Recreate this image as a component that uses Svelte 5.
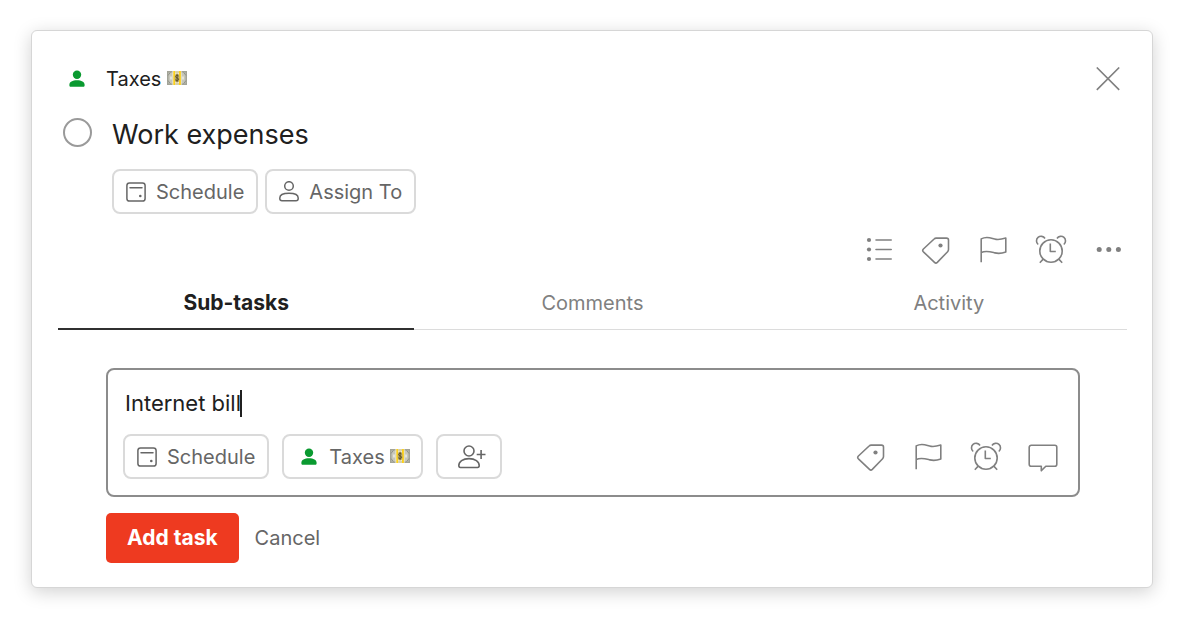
<script>
  let title = $state('Internet bill');
  let done = $state(false);
  let active = $state('Sub-tasks');
  const tabs = ['Sub-tasks', 'Comments', 'Activity'];
</script>

{#snippet person()}
  <svg class="person" width="16" height="18" viewBox="0 0 16 18" fill="#0a9a30" aria-hidden="true">
    <circle cx="8" cy="4.800" r="4.200" />
    <path d="M0.400 14.600C0.400 11.900 3.600 10.200 8 10.200s7.600 1.700 7.600 4.400v0.900c0 0.800-0.600 1.300-1.300 1.300H1.700c-0.700 0-1.300-0.500-1.300-1.300z" />
  </svg>
{/snippet}

{#snippet money()}
  <svg class="money" width="20" height="14" viewBox="0 0 20 14" role="img" aria-label="Money">
    <rect width="20" height="14" fill="#a3a498" />
    <rect x="1.500" y="1.500" width="17" height="11" fill="#c6c6ba" />
    <path d="M1 4.500 3.500 1.200M1 9.500l2.500 3.300M19 4.500l-2.500-3.300M19 9.500l-2.500 3.300" stroke="#92938a" fill="none" />
    <path d="M4 5.500v3M16 5.500v3" stroke="#eeeee4" stroke-width="1.500" />
    <rect x="5.500" width="9" height="14" fill="#f3efd8" />
    <rect x="6.300" width="1.900" height="14" fill="#fbd01c" />
    <rect x="12" width="1.900" height="14" fill="#fbd01c" />
    <ellipse cx="10.100" cy="7" rx="2.400" ry="4.500" fill="#b5a672" />
    <rect x="8.200" width="3.800" height="2" fill="#d8d0a8" />
    <rect x="8.200" y="12" width="3.800" height="2" fill="#d8d0a8" />
    <path d="M11.500 5c-0.500-0.800-2.900-0.800-2.900 0.600 0 1.500 3 1.100 3 2.700 0 1.500-2.700 1.400-3.300 0.500M10.100 3.200v7.600" fill="none" stroke="#5f5326" />
  </svg>
{/snippet}

{#snippet calendar()}
  <svg width="20" height="20" viewBox="0 0 20 20" fill="none" stroke="#666" stroke-width="1.500" aria-hidden="true">
    <rect x="0.900" y="0.900" width="18.200" height="18.200" rx="2.600" />
    <path d="M4 5.700h12" stroke-linecap="round" />
    <circle cx="14.300" cy="14" r="1.300" fill="#666" stroke="none" />
  </svg>
{/snippet}

{#snippet tag()}
  <svg width="32" height="32" viewBox="0 0 32 32" aria-hidden="true">
    <path d="M15.200 4.100h10.300a2 2 0 0 1 2 2v9.500a3 3 0 0 1-0.900 2.100L16.300 28.400a2 2 0 0 1-2.800 0L2.400 17.800a2 2 0 0 1 0-2.800L13.100 5a3 3 0 0 1 2.100-0.900z" />
    <circle class="dot" cx="19.500" cy="11.500" r="2.100" />
  </svg>
{/snippet}

{#snippet flag()}
  <svg width="32" height="32" viewBox="0 0 32 32" aria-hidden="true">
    <path d="M3.200 28.300V4.900C9.500 1.400 13.700 4.700 18.100 5.400c3.500 0.600 6.500-0.300 9.700-1.300v13.900c-4 1.500-7.300 1.800-11 0.900-4.600-1.200-8.600-2.600-13.600-0.400" />
  </svg>
{/snippet}

{#snippet alarm()}
  <svg width="32" height="32" viewBox="0 0 32 32" aria-hidden="true">
    <circle cx="16" cy="17" r="11.200" />
    <path d="M15.300 9.500v8h5.500M8.200 25.100l-3.400 3.600M23.800 25.100l3.400 3.600M3.200 10.500A4.600 4.600 0 1 1 10 4.500M28.800 10.500A4.600 4.600 0 1 0 22 4.500" />
  </svg>
{/snippet}

<main class="card">
  <header class="head">
    <span class="lead">{@render person()}</span>
    <span class="project">Taxes {@render money()}</span>
    <button class="icon close" aria-label="Close">
      <svg width="24" height="24" viewBox="0 0 24 24" aria-hidden="true"><path d="M0.800 0.500 23.200 22.900M23.200 0.500 0.800 22.900" /></svg>
    </button>
  </header>

  <div class="title">
    <span class="lead"><input class="check" type="checkbox" id="done" bind:checked={done} /></span>
    <label for="done">Work expenses</label>
  </div>

  <div class="chips main-chips">
    <button class="chip">{@render calendar()}Schedule</button>
    <button class="chip">
      <svg width="20" height="22" viewBox="0 0 20 22" fill="none" stroke="#666" stroke-width="1.500" aria-hidden="true">
        <circle cx="10" cy="5" r="4.300" />
        <path d="M0.800 17c0-2.900 3.900-4.700 9.200-4.700s9.200 1.800 9.200 4.700v0.400c0 1.500-0.900 2.300-2.200 2.300H3c-1.300 0-2.200-0.800-2.200-2.300z" />
      </svg>Assign To
    </button>
  </div>

  <div class="toolbar">
    <button class="icon" aria-label="Sub-task list">
      <svg width="32" height="32" viewBox="0 0 32 32" aria-hidden="true">
        <path d="M12 6h15.200M12 15.500h15.200M12 25h15.200" stroke-linecap="round" />
        <circle class="dot" cx="5" cy="6" r="2.100" /><circle class="dot" cx="5" cy="15.500" r="2.100" /><circle class="dot" cx="5" cy="25" r="2.100" />
      </svg>
    </button>
    <button class="icon" aria-label="Labels">{@render tag()}</button>
    <button class="icon" aria-label="Priority">{@render flag()}</button>
    <button class="icon" aria-label="Reminders">{@render alarm()}</button>
    <button class="icon" aria-label="More actions">
      <svg width="32" height="32" viewBox="0 0 32 32" aria-hidden="true">
        <circle class="dot" cx="7.200" cy="15.500" r="2.500" /><circle class="dot" cx="16.800" cy="15.500" r="2.500" /><circle class="dot" cx="26.400" cy="15.500" r="2.500" />
      </svg>
    </button>
  </div>

  <div class="tabs" role="tablist">
    {#each tabs as tab}
      <button role="tab" class:active={active === tab} aria-selected={active === tab} onclick={() => (active = tab)}>{tab}</button>
    {/each}
  </div>

  <form class="form" onsubmit={(e) => e.preventDefault()}>
    <div class="editor">
      <div class="field">
        <input type="text" aria-label="Task name" bind:value={title} /><span class="caret"></span>
      </div>
      <div class="row">
        <div class="chips wide">
          <button type="button" class="chip">{@render calendar()}Schedule</button>
          <button type="button" class="chip project-chip">{@render person()}<span>Taxes {@render money()}</span></button>
          <button type="button" class="chip assign" aria-label="Assign">
            <svg width="28" height="24" viewBox="0 0 28 24" fill="none" stroke="#666" stroke-width="1.600" aria-hidden="true">
              <circle cx="11" cy="6" r="5" />
              <path d="M0.800 20.600c0-4 4-7 10.200-7s10.200 3 10.200 7c0 1.300-0.500 1.900-1.600 1.900H2.400c-1.100 0-1.600-0.600-1.600-1.900zM18.700 9.500h8.800M23.100 5.100v8.800" />
            </svg>
          </button>
        </div>
        <div class="tools">
          <button type="button" class="icon" aria-label="Labels">{@render tag()}</button>
          <button type="button" class="icon" aria-label="Priority">{@render flag()}</button>
          <button type="button" class="icon" aria-label="Reminders">{@render alarm()}</button>
          <button type="button" class="icon" aria-label="Comment">
            <svg width="32" height="32" viewBox="0 0 32 32" aria-hidden="true">
              <path d="M4.200 4.300h23.600a2 2 0 0 1 2 2v17a2 2 0 0 1-2 2H18.800L14.300 29.800V25.300H4.200a2 2 0 0 1-2-2v-17a2 2 0 0 1 2-2z" />
            </svg>
          </button>
        </div>
      </div>
    </div>
    <div class="actions">
      <button class="submit">Add task</button>
      <button type="button" class="cancel">Cancel</button>
    </div>
  </form>
</main>

<style>
  :global(body) {
    background: #fff;
  }
  .card {
    margin: 30px 29px 28px 31px;
    padding: 32px 25px 24px 26px;
    border: 1px solid #d6d6d6;
    border-radius: 6px;
    background: #fff;
    box-shadow: 0 4px 18px rgba(0, 0, 0, 0.18);
    color: #202020;
    font: 20px/28px Inter, "Liberation Sans", sans-serif;
  }
  button,
  input {
    margin: 0;
    padding: 0;
    border: 0;
    background: none;
    color: inherit;
    font: inherit;
  }
  button {
    cursor: pointer;
  }
  svg {
    display: block;
    flex: none;
  }
  .head,
  .title {
    display: flex;
    align-items: center;
  }
  .head {
    height: 32px;
  }
  .lead {
    display: flex;
    justify-content: center;
    width: 38px;
  }
  .project {
    flex: 1;
    padding-left: 10px;
  }
  .money {
    display: inline-block;
    margin-bottom: 1px;
  }
  .icon {
    display: flex;
    align-items: center;
    justify-content: center;
    width: 32px;
    height: 32px;
  }
  .icon svg {
    fill: none;
    stroke: #808080;
    stroke-width: 1.6;
    stroke-linejoin: round;
  }
  .icon .dot {
    fill: #808080;
    stroke: none;
  }
  .close {
    margin-right: 3px;
  }
  .title {
    margin-top: 22px;
    height: 36px;
    font-size: 27px;
    line-height: 36px;
  }
  .title label {
    padding-left: 16px;
  }
  .check {
    appearance: none;
    width: 29px;
    height: 29px;
    margin-bottom: 5px;
    border: 2px solid #9a9a9a;
    border-radius: 50%;
  }
  .check:checked {
    background: #8a8a8a;
  }
  .chips {
    display: flex;
    gap: 7px;
  }
  .main-chips {
    margin: 16px 0 0 54px;
  }
  .wide {
    gap: 13px;
  }
  .chip {
    display: flex;
    align-items: center;
    gap: 10px;
    height: 45px;
    padding: 0 12px;
    border: 2px solid #dadada;
    border-radius: 8px;
    color: #666;
  }
  .project-chip {
    gap: 12px;
    padding: 0 11px 0 17px;
  }
  .assign {
    padding: 0 14px 0 20px;
  }
  .toolbar,
  .tools {
    display: flex;
    justify-content: flex-end;
    gap: 25px;
  }
  .toolbar {
    margin: 20px 3px 0 0;
  }
  .tabs {
    display: grid;
    grid-template-columns: repeat(3, 1fr);
    margin-top: 12px;
    border-bottom: 1px solid #dcdcdc;
  }
  .tabs button {
    height: 52px;
    margin-bottom: -1px;
    border-bottom: 2px solid transparent;
    color: #808080;
  }
  .tabs .active {
    border-color: #303030;
    color: #202020;
    font-size: 21px;
    font-weight: 700;
  }
  .form {
    margin: 38px 47px 0 48px;
  }
  .editor {
    padding: 19px 19px 16px 15px;
    border: 2px solid #8c8c8c;
    border-radius: 8px;
  }
  .field {
    display: flex;
    align-items: center;
    padding-left: 2px;
    font-size: 22px;
  }
  .field input {
    field-sizing: content;
    height: 28px;
    min-width: 1px;
    outline: none;
    caret-color: transparent;
  }
  .caret {
    width: 2px;
    height: 27px;
    margin-left: -1px;
    background: #202020;
  }
  .row {
    display: flex;
    align-items: center;
    justify-content: space-between;
    margin-top: 17px;
  }
  .actions {
    display: flex;
    align-items: center;
    gap: 16px;
    margin-top: 16px;
  }
  .submit {
    height: 50px;
    padding: 0 21px;
    border-radius: 5px;
    background: #ee3a20;
    color: #fff;
    font-size: 21px;
    font-weight: 700;
  }
  .cancel {
    color: #666;
  }
</style>
